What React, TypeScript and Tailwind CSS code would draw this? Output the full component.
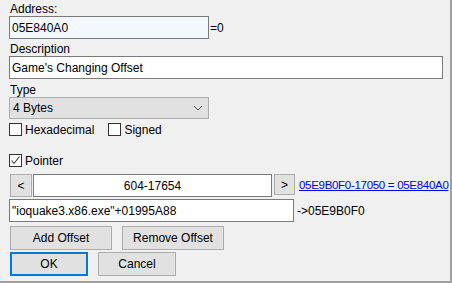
import React from "react";

const Check = ({ checked }: { checked?: boolean }) => (
    <div className="w-[13px] h-[13px] border border-[#333333] bg-white flex items-center justify-center">
        {checked && (
            <svg width="11" height="11" viewBox="0 0 11 11">
                <path d="M1.5 5.5 L4 8.5 L9.5 1.5" fill="none" stroke="#333333" strokeWidth="1.1" />
            </svg>
        )}
    </div>
);

const Btn = ({ label, w, primary }: { label: string; w: string; primary?: boolean }) => (
    <div
        className={`${w} h-[24px] flex items-center justify-center bg-[#e1e1e1] ${
            primary ? "border-2 border-[#0078d7]" : "border border-[#adadad]"
        }`}
    >
        {label}
    </div>
);

const App = () => {
    return (
        <div
            className="w-[452px] h-[283px] bg-[#f0f0f0] border-r-2 border-b-2 border-[#a0a0a0] text-[12px] text-black pl-[9px] pt-[2px] flex flex-col whitespace-nowrap overflow-hidden"
            style={{ fontFamily: '"Liberation Sans", Arial, sans-serif' }}
        >
            <div className="h-[14px] leading-[14px] pl-[1px]">Address:</div>
            <div className="flex items-center h-[23px]">
                <div className="w-[200px] h-[23px] border border-[#7a7a7a] bg-[#f3f8fd] px-[2px] flex items-center">
                    05E840A0
                </div>
                <span className="ml-[1px] mt-[1px]">=0</span>
            </div>
            <div className="h-[14px] leading-[14px] mt-[3px] pl-[1px]">Description</div>
            <div className="w-[434px] h-[23px] border border-[#7a7a7a] bg-white px-[2px] flex items-center">
                Game's Changing Offset
            </div>
            <div className="h-[14px] leading-[14px] mt-[4px] pl-[1px]">Type</div>
            <div className="w-[200px] h-[22px] border border-[#adadad] bg-[#e1e1e1] px-[3px] flex items-center justify-between">
                <span>4 Bytes</span>
                <svg width="10" height="6" viewBox="0 0 10 6" className="mr-[2px]">
                    <path d="M1 1 L5 5 L9 1" fill="none" stroke="#555555" strokeWidth="1" />
                </svg>
            </div>
            <div className="flex items-center h-[13px] mt-[4px]">
                <Check />
                <span className="ml-[3px]">Hexadecimal</span>
                <div className="ml-[14px]">
                    <Check />
                </div>
                <span className="ml-[3px]">Signed</span>
            </div>
            <div className="flex items-center h-[13px] mt-[18px]">
                <Check checked />
                <span className="ml-[3px]">Pointer</span>
            </div>
            <div className="flex items-center h-[23px] mt-[7px]">
                <div className="ml-[1px] w-[22px] h-[23px] border border-[#adadad] bg-[#e1e1e1] flex items-center justify-center">
                    &lt;
                </div>
                <div className="ml-[1px] w-[239px] h-[23px] border border-[#7a7a7a] bg-white flex items-center justify-center">
                    604-17654
                </div>
                <div className="ml-[2px] w-[21px] h-[21px] self-start border border-[#adadad] bg-[#e1e1e1] flex items-center justify-center">
                    &gt;
                </div>
                <span className="ml-[4px] text-[#0000ee] underline text-[11.5px] tracking-[-0.3px]">05E9B0F0-17050 = 05E840A0</span>
            </div>
            <div className="flex items-center h-[23px] mt-[2px]">
                <div className="w-[285px] h-[23px] border border-[#7a7a7a] bg-white px-[2px] flex items-center">
                    "ioquake3.x86.exe"+01995A88
                </div>
                <span className="ml-[3px]">-&gt;05E9B0F0</span>
            </div>
            <div className="flex items-center h-[23px] mt-[4px] pl-[1px] gap-[10px]">
                <Btn label="Add Offset" w="w-[102px]" />
                <Btn label="Remove Offset" w="w-[102px]" />
            </div>
            <div className="flex items-center mt-[3px] pl-[1px] gap-[10px]">
                <Btn label="OK" w="w-[78px]" primary />
                <Btn label="Cancel" w="w-[78px]" />
            </div>
        </div>
    );
};

export default App;
